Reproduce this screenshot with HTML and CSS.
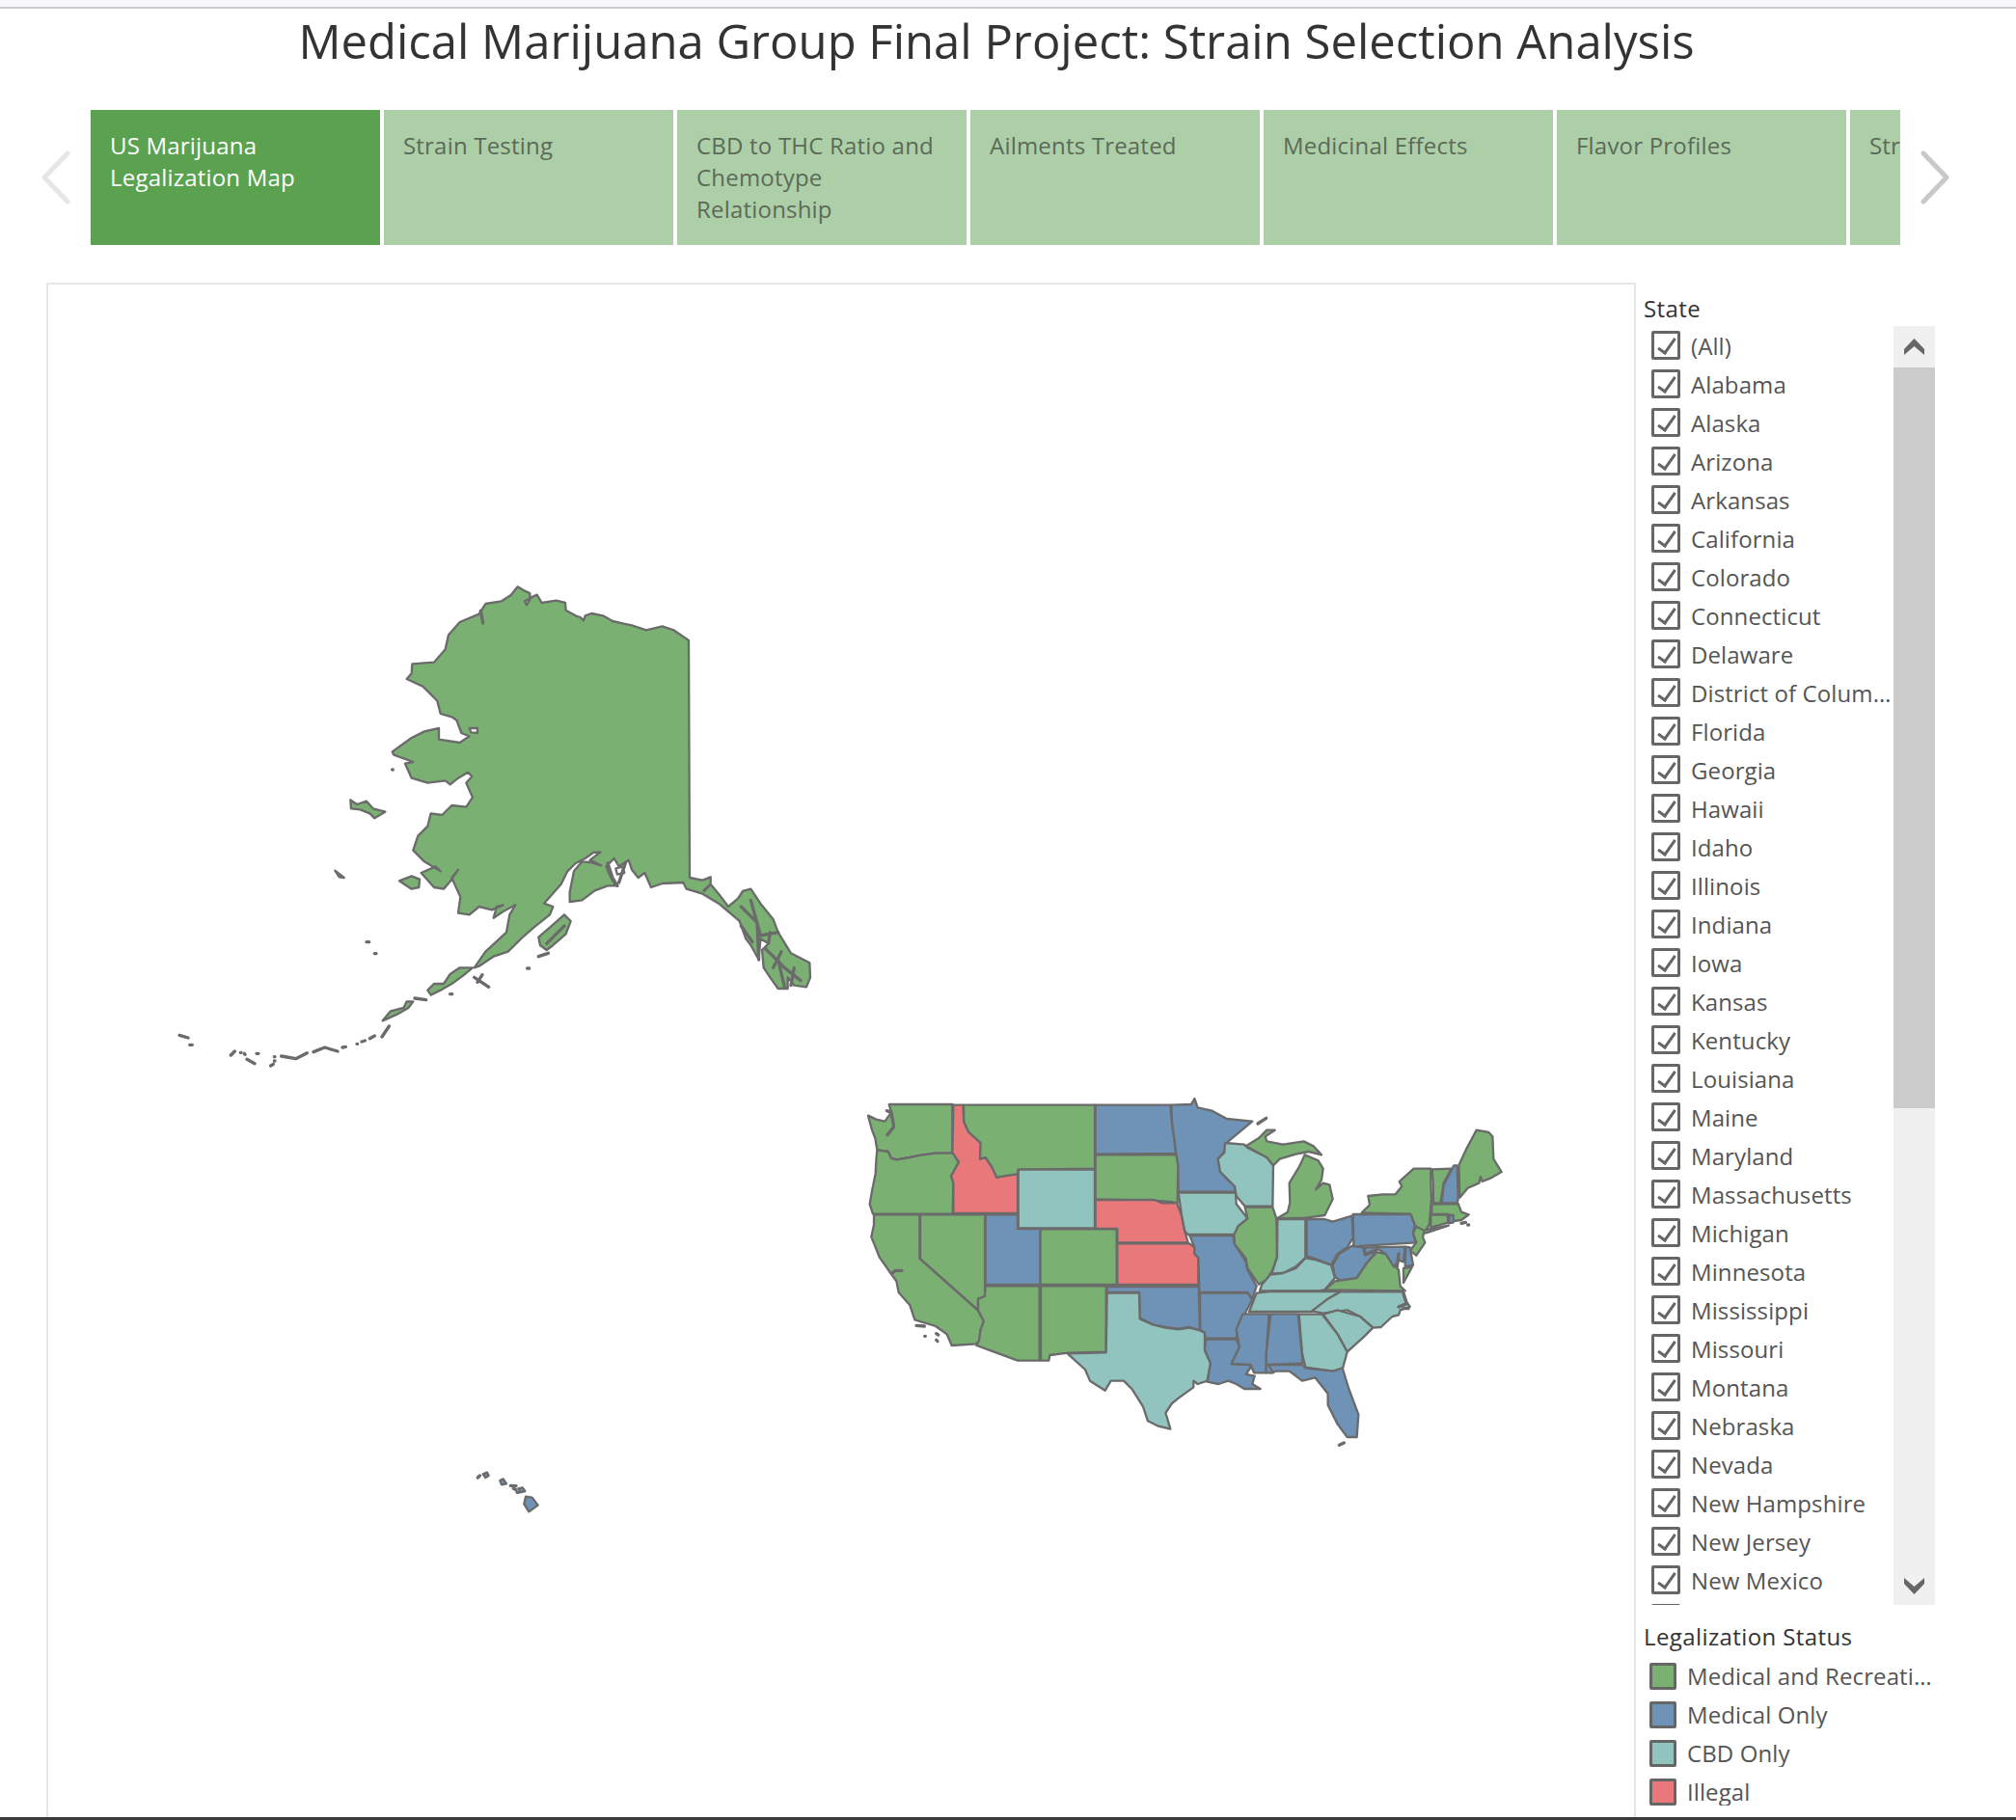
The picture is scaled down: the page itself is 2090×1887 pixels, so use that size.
FILE: index.html
```html
<!DOCTYPE html>
<html lang="en">
<head>
    <meta charset="UTF-8">
    <title>Medical Marijuana Group Final Project: Strain Selection Analysis</title>
    <link rel="stylesheet" href="styles.css">
</head>
<body>
    <div class="topbar"></div>
    <h1 class="title">Medical Marijuana Group Final Project: Strain Selection Analysis</h1>

    <div class="nav">
        <svg class="nav-arrow left" viewBox="0 0 33 56"><path d="M29 3 L5 28 L29 53"/></svg>
        <div class="tabs">
            <div class="tab active">US Marijuana Legalization Map</div>
            <div class="tab">Strain Testing</div>
            <div class="tab">CBD to THC Ratio and Chemotype Relationship</div>
            <div class="tab">Ailments Treated</div>
            <div class="tab">Medicinal Effects</div>
            <div class="tab">Flavor Profiles</div>
            <div class="tab">Strain Recommender</div>
        </div>
        <svg class="nav-arrow" viewBox="0 0 33 56"><path d="M4 3 L28 28 L4 53"/></svg>
    </div>

    <div class="main">
        <div class="map-card">
            <svg class="map" viewBox="50 295 1644 1589">
                <!-- Alaska, traced at 3x from (340,590) -->
                <g transform="translate(340 590) scale(.33333)" class="states">
                    <path class="green" d="M590,55 L612,68 L628,75 L628,92 L612,100 L618,112 L632,88 L650,80 L665,105 L710,98 L738,105 L740,128 L770,145 L785,150 L795,160 L800,145 L820,138 L855,145 L885,162 L920,170 L945,175 L990,190 L1040,178 L1075,190 L1122,222 L1125,960 L1165,968 L1190,958 L1190,980 L1215,1010 L1245,1050 L1275,1025 L1290,1002 L1315,995 L1345,1040 L1385,1090 L1400,1130 L1440,1195 L1498,1225 L1500,1270 L1488,1300 L1450,1295 L1430,1270 L1430,1305 L1400,1305 L1375,1270 L1355,1240 L1350,1185 L1370,1165 L1345,1150 L1340,1215 L1315,1170 L1300,1150 L1280,1095 L1245,1065 L1215,1040 L1165,1010 L1115,995 L1105,975 L1040,978 L1005,990 L985,945 L965,960 L945,935 L935,905 L905,925 L890,900 L865,925 L880,960 L895,985 L870,985 L830,1000 L790,1030 L752,1035 L752,1005 L765,940 L790,910 L815,912 L850,922 L815,905 L848,880 L825,882 L800,900 L770,915 L745,940 L725,980 L690,1020 L672,1040 L700,1050 L690,1075 L640,1115 L600,1150 L560,1190 L515,1205 L470,1235 L455,1240 L490,1190 L555,1130 L565,1075 L583,1045 L545,1065 L515,1085 L525,1050 L545,1045 L510,1060 L470,1050 L440,1075 L405,1070 L412,1020 L385,960 L405,935 L385,965 L360,995 L330,990 L290,945 L335,925 L350,940 L300,910 L265,875 L280,830 L310,800 L320,760 L355,765 L385,735 L430,740 L450,710 L430,665 L448,645 L435,632 L405,650 L380,670 L365,658 L310,665 L260,650 L240,605 L265,600 L205,578 L200,568 L260,525 L300,505 L345,495 L345,530 L410,540 L440,520 L415,510 L400,470 L385,460 L350,450 L340,410 L295,365 L245,342 L260,325 L262,295 L330,290 L365,250 L375,205 L410,165 L470,140 L490,108 L540,100 L570,80 Z"/>
                    <path class="hole" d="M895,932 L915,925 L922,945 L900,950 Z"/>
                    <path class="hole" d="M440,495 L465,495 L465,510 L445,508 Z"/>
                    <path class="green" d="M70,718 L72,745 L100,748 L130,760 L145,775 L178,755 L140,745 L120,722 L90,732 Z"/>
                    <path class="green" d="M222,970 L260,955 L285,965 L283,990 L260,995 Z"/>
                    <path class="green" d="M655,1145 L690,1115 L735,1075 L755,1095 L740,1135 L700,1170 L680,1185 L660,1170 Z"/>
                    <path class="green" d="M310,1310 L330,1290 L360,1290 L380,1260 L410,1240 L450,1240 L420,1265 L385,1290 L350,1310 L320,1325 Z"/>
                    <path class="green" d="M170,1405 L195,1375 L235,1365 L245,1345 L265,1345 L250,1365 L215,1385 Z"/>
                    <path class="green" d="M22,938 L50,960 L35,958 Z"/>
                    <path class="specks" d="M475,130 L482,168 M870,915 L885,960 L900,985 M925,915 L905,975 M1285,1050 L1335,1100 L1340,1215 M1315,1030 L1345,1140 L1400,1130 M1360,1180 L1420,1240 L1470,1280 M1400,1215 L1420,1300 M1450,1240 L1440,1295 M1285,1110 L1320,1160 M1375,1130 L1370,1165 M1410,1190 L1385,1240 M455,1270 L500,1300 M465,1285 L480,1262 M680,1165 L735,1110 M120,1160 L128,1160 M145,1196 L150,1196 M620,1242 L626,1242 M655,1205 L685,1195 M380,1322 L386,1322 M270,1335 L305,1340 M200,624 L202,624 M1170,1000 L1185,985"/>
                </g>

                <!-- Aleutians, traced at 3x from (170,1030) -->
                <g transform="translate(170 1030) scale(.33333)" class="specks">
                    <path d="M48,130 L75,138 M80,160 L88,160 M208,192 L220,180 M238,184 L240,184 M250,187 L252,190 M258,205 L282,218 M288,187 L294,187 M343,197 L345,197 M343,210 L345,210 M332,225 L340,220 M365,195 L410,203 L445,185 M465,182 L500,168 L540,180 M555,168 L565,166 M600,157 L602,157 M615,150 L625,147 M640,140 L655,132 M678,135 L700,102"/>
                </g>

                <!-- Hawaii, traced at 3x from (480,1510) -->
                <g transform="translate(480 1510) scale(.33333)" class="states">
                    <path class="blue" d="M62,55 L75,50 L80,60 L70,66 Z"/>
                    <path class="blue" d="M115,75 L125,70 L135,85 L120,88 Z"/>
                    <path class="blue" d="M172,100 L185,97 L193,108 L178,112 Z"/>
                    <path class="blue" d="M195,125 L215,128 L233,152 L205,172 L190,148 Z"/>
                    <path class="specks" d="M46,66 L52,60 M148,91 L165,92 M157,100 L165,104 M168,112 L172,112"/>
                </g>

                <!-- west and centre, traced at 3x from (880,1120) -->
                <g transform="translate(880 1120) scale(.33333)" class="states">
                    <path class="green" d="M125,75 L322,75 L322,227 L270,227 L225,233 L190,240 L150,247 L132,243 L122,222 L88,217 L82,180 L72,155 L60,110 L85,122 L112,128 L132,100 Z"/>
                    <path class="specks" d="M118,95 L132,100 L140,145 L120,170"/>
                    <path class="green" d="M88,217 L122,222 L132,243 L150,247 L190,240 L225,233 L270,227 L328,227 L342,255 L320,295 L325,320 L323,416 L75,416 L65,385 L72,345 L83,290 L85,250 Z"/>
                    <path class="red" d="M325,77 L355,77 L358,130 L372,160 L410,195 L408,245 L425,240 L445,270 L460,302 L500,295 L525,290 L525,414 L325,414 L325,320 L318,298 L342,255 L322,225 Z"/>
                    <path class="green" d="M357,77 L765,77 L765,275 L527,278 L525,292 L500,295 L460,302 L445,270 L425,240 L408,245 L410,195 L372,160 L358,130 Z"/>
                    <path class="teal" d="M527,278 L765,277 L765,460 L527,460 Z"/>
                    <path class="blue" d="M767,77 L1000,77 L1005,130 L1018,228 L767,230 Z"/>
                    <path class="green" d="M767,232 L1018,232 L1024,262 L1022,382 L1000,378 L955,375 L767,370 Z"/>
                    <path class="red" d="M767,372 L950,372 L975,382 L1020,382 L1035,420 L1045,470 L1055,505 L835,505 L835,462 L767,462 Z"/>
                    <path class="red" d="M835,508 L1060,508 L1075,520 L1075,540 L1087,552 L1087,636 L835,636 Z"/>
                    <path class="green" d="M595,463 L833,463 L833,636 L595,636 Z"/>
                    <path class="blue" d="M425,418 L525,418 L525,462 L595,462 L595,636 L425,636 Z"/>
                    <path class="green" d="M222,418 L423,418 L423,672 L402,680 L402,715 L222,555 Z"/>
                    <path class="green" d="M78,418 L220,418 L220,555 L402,717 L420,750 L410,775 L405,810 L397,820 L320,825 L305,790 L270,765 L205,745 L190,700 L155,660 L148,625 L130,600 L95,550 L70,487 L78,450 Z"/>
                    <path class="specks" d="M135,600 L145,592 L165,592 M210,763 L235,765 M236,796 L238,796 M272,788 L278,792 M272,808 L276,812"/>
                    <path class="green" d="M425,640 L593,640 L593,872 L525,872 L397,825 L405,810 L410,775 L420,750 L402,715 L402,680 L423,672 Z"/>
                    <path class="green" d="M597,640 L800,640 L800,845 L682,848 L625,855 L622,872 L597,872 Z"/>
                    <path class="blue" d="M803,642 L1088,642 L1092,778 L1060,768 L1025,773 L985,768 L945,760 L905,740 L903,660 L803,660 Z"/>
                    <path class="teal" d="M803,662 L903,662 L905,742 L945,760 L985,770 L1025,775 L1060,770 L1092,778 L1107,785 L1107,840 L1125,880 L1115,935 L1085,945 L1072,935 L1072,955 L1030,985 L1005,1005 L995,1020 L985,1035 L990,1050 L1000,1085 L960,1075 L930,1060 L915,1015 L880,960 L855,935 L815,935 L797,965 L750,935 L735,900 L680,850 L800,847 Z"/>
                    <path class="blue" d="M1060,483 L1195,483 L1200,510 L1235,565 L1240,590 L1268,640 L1255,680 L1240,660 L1090,660 L1087,552 L1075,540 L1075,520 Z"/>
                    <path class="blue" d="M1092,662 L1240,662 L1255,682 L1235,720 L1210,770 L1205,803 L1108,803 L1107,785 L1093,778 Z"/>
                    <path class="blue" d="M1110,806 L1205,806 L1215,830 L1190,882 L1255,885 L1235,915 L1262,920 L1255,945 L1280,960 L1230,960 L1205,945 L1180,935 L1150,945 L1115,938 L1125,880 L1107,840 Z"/>
                    <path class="teal" d="M1025,350 L1203,350 L1205,385 L1240,430 L1210,455 L1205,480 L1055,480 L1045,470 L1035,420 Z"/>
                    <path class="blue" d="M1003,77 L1065,75 L1075,57 L1085,85 L1130,95 L1175,120 L1255,128 L1180,190 L1165,225 L1148,245 L1155,285 L1200,330 L1203,347 L1025,347 L1024,262 L1018,228 L1005,130 Z"/>
                </g>

                <!-- east, traced at 3x from (1180,1120) -->
                <g transform="translate(1180 1120) scale(.33333)" class="states">
                    <path class="teal" d="M270,195 L330,200 L340,210 L400,240 L420,265 L418,392 L332,392 L305,360 L300,330 L255,285 L248,245 L268,225 Z"/>
                    <path class="green" d="M335,205 L375,180 L400,155 L425,155 L395,175 L400,190 L450,200 L515,190 L545,205 L570,232 L530,222 L490,230 L440,245 L420,265 L400,240 Z"/>
                    <path class="specks" d="M372,135 L398,118"/>
                    <path class="green" d="M518,232 L560,250 L575,275 L570,310 L552,340 L575,320 L595,325 L605,370 L580,420 L520,428 L432,430 L465,410 L472,380 L470,320 L500,270 L510,250 Z"/>
                    <path class="green" d="M332,395 L418,395 L430,430 L432,550 L418,590 L400,620 L375,635 L340,585 L335,555 L300,510 L298,480 L310,455 L340,430 Z"/>
                    <path class="teal" d="M433,432 L520,432 L520,552 L490,580 L450,600 L415,602 L432,550 Z"/>
                    <path class="blue" d="M524,432 L580,432 L605,440 L665,422 L668,490 L650,520 L620,540 L600,575 L550,555 L524,548 Z"/>
                    <path class="teal" d="M410,605 L450,600 L490,585 L520,553 L550,558 L600,575 L612,615 L580,652 L560,655 L400,655 L378,655 L385,635 Z"/>
                    <path class="teal" d="M368,662 L410,657 L630,657 L590,680 L540,720 L345,720 Z"/>
                    <path class="blue" d="M605,575 L625,540 L665,515 L700,520 L705,545 L742,530 L710,570 L680,615 L635,628 L612,612 Z"/>
                    <path class="green" d="M580,652 L612,625 L680,615 L710,570 L742,535 L770,540 L795,575 L810,590 L815,640 L830,655 Z"/>
                    <path class="teal" d="M540,718 L590,680 L630,658 L825,658 L835,690 L845,705 L815,715 L810,730 L790,735 L755,768 L730,770 L690,735 L650,715 L575,725 Z"/>
                    <path class="teal" d="M575,728 L620,715 L690,735 L730,770 L700,800 L650,845 L620,790 Z"/>
                    <path class="teal" d="M500,728 L572,728 L620,790 L650,845 L635,900 L605,905 L520,893 L510,850 Z"/>
                    <path class="blue" d="M405,885 L510,885 L520,895 L605,905 L635,895 L655,960 L685,1040 L680,1110 L650,1110 L620,1070 L590,1010 L590,975 L550,925 L510,935 L470,905 L430,905 L410,910 Z"/>
                    <path class="blue" d="M412,727 L497,727 L512,880 L405,885 L420,910 L397,910 L398,850 Z"/>
                    <path class="blue" d="M325,727 L407,727 L398,850 L397,910 L360,910 L350,885 L290,882 L315,830 L305,775 Z"/>
                    <path class="specks" d="M625,1135 L640,1128"/>
                </g>

                <!-- northeast, traced at 3x from (1400,1160) -->
                <g transform="translate(1400 1160) scale(.33333)" class="states">
                    <path class="green" d="M35,292 L60,268 L55,240 L100,235 L140,235 L160,210 L152,195 L197,155 L250,155 L250,200 L252,250 L245,330 L235,345 L262,340 L305,332 L235,355 L225,355 L200,330 L187,296 Z"/>
                    <path class="green" d="M254,157 L314,155 L290,200 L280,262 L258,262 L257,200 Z"/>
                    <path class="blue" d="M322,145 L332,145 L335,250 L332,262 L284,262 L290,205 Z"/>
                    <path class="green" d="M337,145 L360,95 L392,35 L430,42 L442,55 L445,125 L470,165 L435,185 L410,195 L405,180 L400,200 L365,215 L340,245 Z"/>
                    <path class="green" d="M253,266 L335,264 L345,290 L368,298 L345,315 L320,318 L305,297 L253,296 Z"/>
                    <path class="green" d="M250,299 L302,299 L304,323 L250,338 Z"/>
                    <path class="blue" d="M307,300 L320,300 L320,322 L307,325 Z"/>
                    <path class="blue" d="M8,297 L187,297 L200,330 L195,355 L203,385 L10,397 Z"/>
                    <path class="green" d="M205,335 L230,348 L225,368 L232,385 L205,425 L185,410 L205,385 L195,355 Z"/>
                    <path class="blue" d="M45,400 L170,398 L165,445 L150,440 L135,460 L110,420 L85,405 L45,420 Z"/>
                    <path class="blue" d="M172,398 L185,400 L195,455 L170,460 Z"/>
                    <path class="green" d="M165,465 L192,460 L165,510 Z"/>
                    <path class="specks" d="M150,420 L145,460 M345,325 L358,322 M365,330 L368,330 M165,545 L175,575 L150,585 M165,590 L180,590"/>
                </g>
            </svg>
        </div>

        <div class="side">
            <div class="side-title">State</div>
            <div class="filter">
                <div class="filter-rows">
                    <div class="row"><span class="check"></span><span class="label">(All)</span></div>
                    <div class="row"><span class="check"></span><span class="label">Alabama</span></div>
                    <div class="row"><span class="check"></span><span class="label">Alaska</span></div>
                    <div class="row"><span class="check"></span><span class="label">Arizona</span></div>
                    <div class="row"><span class="check"></span><span class="label">Arkansas</span></div>
                    <div class="row"><span class="check"></span><span class="label">California</span></div>
                    <div class="row"><span class="check"></span><span class="label">Colorado</span></div>
                    <div class="row"><span class="check"></span><span class="label">Connecticut</span></div>
                    <div class="row"><span class="check"></span><span class="label">Delaware</span></div>
                    <div class="row"><span class="check"></span><span class="label">District of Columbia</span></div>
                    <div class="row"><span class="check"></span><span class="label">Florida</span></div>
                    <div class="row"><span class="check"></span><span class="label">Georgia</span></div>
                    <div class="row"><span class="check"></span><span class="label">Hawaii</span></div>
                    <div class="row"><span class="check"></span><span class="label">Idaho</span></div>
                    <div class="row"><span class="check"></span><span class="label">Illinois</span></div>
                    <div class="row"><span class="check"></span><span class="label">Indiana</span></div>
                    <div class="row"><span class="check"></span><span class="label">Iowa</span></div>
                    <div class="row"><span class="check"></span><span class="label">Kansas</span></div>
                    <div class="row"><span class="check"></span><span class="label">Kentucky</span></div>
                    <div class="row"><span class="check"></span><span class="label">Louisiana</span></div>
                    <div class="row"><span class="check"></span><span class="label">Maine</span></div>
                    <div class="row"><span class="check"></span><span class="label">Maryland</span></div>
                    <div class="row"><span class="check"></span><span class="label">Massachusetts</span></div>
                    <div class="row"><span class="check"></span><span class="label">Michigan</span></div>
                    <div class="row"><span class="check"></span><span class="label">Minnesota</span></div>
                    <div class="row"><span class="check"></span><span class="label">Mississippi</span></div>
                    <div class="row"><span class="check"></span><span class="label">Missouri</span></div>
                    <div class="row"><span class="check"></span><span class="label">Montana</span></div>
                    <div class="row"><span class="check"></span><span class="label">Nebraska</span></div>
                    <div class="row"><span class="check"></span><span class="label">Nevada</span></div>
                    <div class="row"><span class="check"></span><span class="label">New Hampshire</span></div>
                    <div class="row"><span class="check"></span><span class="label">New Jersey</span></div>
                    <div class="row"><span class="check"></span><span class="label">New Mexico</span></div>
                    <div class="row"><span class="check"></span></div>
                </div>
                <div class="scrollbar">
                    <div class="scroll-btn"><svg viewBox="0 0 21 18"><path d="M10.5 0 L21 11 L21 17 L10.5 8 L0 17 L0 11 Z"/></svg></div>
                    <div class="scroll-thumb"></div>
                    <div class="scroll-track">
                        <div class="scroll-btn down"><svg viewBox="0 0 21 18"><path d="M10.5 18 L21 7 L21 1 L10.5 10 L0 1 L0 7 Z"/></svg></div>
                    </div>
                </div>
            </div>

            <div class="side-title legend-title">Legalization Status</div>
            <div class="row legend-row"><span class="swatch green"></span><span class="label">Medical and Recreational</span></div>
            <div class="row legend-row"><span class="swatch blue"></span><span class="label">Medical Only</span></div>
            <div class="row legend-row"><span class="swatch teal"></span><span class="label">CBD Only</span></div>
            <div class="row legend-row"><span class="swatch red"></span><span class="label">Illegal</span></div>
        </div>
    </div>
    <div class="bottombar"></div>
</body>
</html>
```

FILE: styles.css
```css
body {
    margin: 0;
    width: 2090px;
    height: 1887px;
    overflow: hidden;
    background: white;
    font-family: "Open Sans", "Noto Sans", sans-serif;
    color: #555;
}
.topbar {
    height: 7px;
    background: #f8f8fa;
    border-bottom: 2px solid #ccc;
}
.title {
    margin: 0;
    height: 105px;
    padding: 5px 24px 0 0;
    box-sizing: border-box;
    text-align: center;
    font-size: 49px;
    line-height: 56px;
    font-weight: 400;
    color: #333;
}

.nav {
    display: flex;
    align-items: center;
    gap: 20px;
    height: 140px;
    padding-left: 41px;
}
.nav-arrow {
    flex: none;
    width: 33px;
    height: 56px;
    fill: none;
    stroke: #c8c8c8;
    stroke-width: 5;
    stroke-linecap: round;
    stroke-linejoin: round;
}
.nav-arrow.left { stroke: #e6e6e6; }
.tabs {
    display: flex;
    gap: 4px;
    width: 1876px;
    height: 140px;
    overflow: hidden;
}
.tab {
    flex: none;
    width: 300px;
    box-sizing: border-box;
    padding: 20px 20px;
    background: #adcfa8;
    color: #5c6a58;
    font-size: 24px;
    line-height: 33px;
    letter-spacing: .2px;
}
.tab.active {
    background: #5aa24f;
    color: white;
}

.main {
    display: flex;
    gap: 8px;
    height: 1591px;
    margin-top: 39px;
    padding-left: 48px;
}
.map-card {
    flex: none;
    width: 1648px;
    box-sizing: border-box;
    border: 2px solid #e6e6e6;
    border-bottom: 0;
}
.map {
    display: block;
    width: 1644px;
    height: 1589px;
    overflow: visible;
}
.states path {
    stroke: #6b6b6b;
    stroke-width: 7;
    stroke-linejoin: round;
}
.specks path, .states path.specks {
    fill: none;
    stroke: #6b6b6b;
    stroke-width: 10;
    stroke-linecap: round;
    stroke-linejoin: round;
}
.states path.hole { fill: white; }
.green { fill: #7ab173; background: #7ab173; }
.blue { fill: #6f92b7; background: #6f92b7; }
.teal { fill: #91c4be; background: #91c4be; }
.red { fill: #e8787a; background: #e8787a; }

.side {
    flex: none;
    width: 302px;
    padding-top: 12px;
}
.side-title {
    height: 33px;
    font-size: 24px;
    line-height: 30px;
    font-weight: 500;
    letter-spacing: .4px;
    color: #333;
}
.filter {
    display: flex;
    height: 1326px;
    overflow: hidden;
}
.filter-rows {
    width: 259px;
    padding-top: 5px;
}
.row {
    display: flex;
    align-items: flex-start;
    height: 40px;
    font-size: 24px;
    line-height: 32px;
    letter-spacing: .1px;
}
.check {
    flex: none;
    position: relative;
    width: 30px;
    height: 30px;
    box-sizing: border-box;
    margin: 0 11px 0 8px;
    border: 3px solid #666;
    border-radius: 2px;
}
.check::after {
    content: "";
    position: absolute;
    left: 8px;
    top: 1px;
    width: 7px;
    height: 17px;
    border-right: 3px solid #666;
    border-bottom: 3px solid #666;
    transform: rotate(35deg);
}
.label {
    flex: 1;
    min-width: 0;
    white-space: nowrap;
    overflow: hidden;
    text-overflow: ellipsis;
}
.scrollbar {
    display: flex;
    flex-direction: column;
    width: 43px;
    background: #f0f0f0;
}
.scroll-btn {
    display: flex;
    align-items: center;
    justify-content: center;
    height: 43px;
}
.scroll-btn.down { height: 40px; }
.scroll-btn svg {
    width: 21px;
    height: 18px;
    fill: #666;
}
.scroll-thumb {
    height: 768px;
    background: #cbcbcb;
}
.scroll-track {
    flex: 1;
    display: flex;
    flex-direction: column;
    justify-content: flex-end;
}

.legend-title {
    height: 42px;
    margin-top: 18px;
}
.legend-row { line-height: 28px; }
.swatch {
    flex: none;
    width: 28px;
    height: 28px;
    box-sizing: border-box;
    margin: 0 11px 0 6px;
    border: 3px solid #666;
    border-radius: 2px;
}
.bottombar {
    height: 3px;
    background: #3a3a3a;
}
```
